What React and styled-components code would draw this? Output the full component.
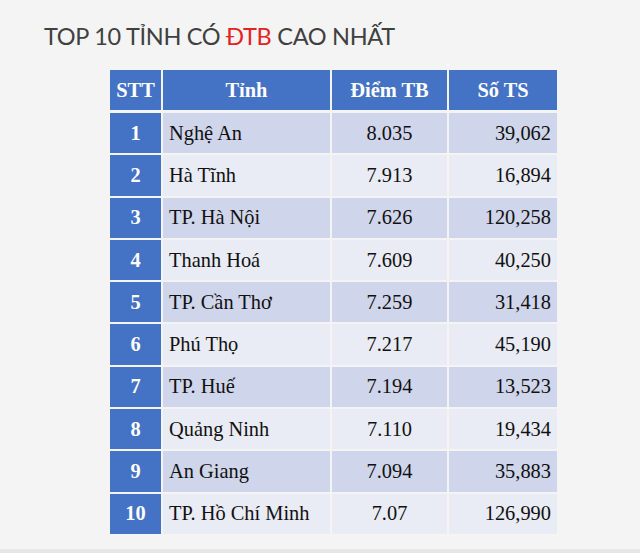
import React from 'react';
import styled, { createGlobalStyle } from 'styled-components';

const GlobalStyle = createGlobalStyle`
  html, body {
    margin: 0;
    padding: 0;
    background: #f4f4f4;
  }
`;

const Page = styled.div`
  width: 640px;
  height: 549px;
  background: #f4f4f4;
  border-bottom: 4px solid #e6e6e6;
  padding-top: 21px;
  box-sizing: border-box;
  height: 553px;
`;

const Title = styled.h1`
  margin: 0 0 0 44px;
  font-family: Lato, "Open Sans", sans-serif;
  font-weight: 400;
  font-size: 23.5px;
  line-height: 30px;
  color: #404040;
  letter-spacing: -0.3px;

  span {
    color: #e2231f;
  }
`;

const Table = styled.div`
  margin: 19px 0 0 110px;
  width: 447px;
  display: grid;
  grid-template-columns: 51px 167px 115px 108px;
  column-gap: 2px;
  font-family: "Liberation Serif", "Times New Roman", serif;
  font-size: 20.4px;
  color: #111;
`;

const HeadCell = styled.div`
  height: 40px;
  margin-bottom: 3px;
  background: #4472c4;
  color: #fff;
  font-weight: 700;
  display: flex;
  align-items: center;
  justify-content: center;
`;

const Cell = styled.div`
  height: 40.3px;
  margin-bottom: 2px;
  background: ${p => (p.$odd ? '#cfd5ea' : '#e9ebf5')};
  display: flex;
  align-items: center;
  justify-content: ${p => p.$align || 'center'};
  padding: 0 ${p => (p.$align === 'flex-end' ? '6px' : '0')} 0 ${p => (p.$align === 'flex-start' ? '6px' : '0')};
`;

const IndexCell = styled(Cell)`
  background: #4472c4;
  color: #fff;
  font-weight: 700;
`;

const rows = [
  ['Nghệ An', '8.035', '39,062'],
  ['Hà Tĩnh', '7.913', '16,894'],
  ['TP. Hà Nội', '7.626', '120,258'],
  ['Thanh Hoá', '7.609', '40,250'],
  ['TP. Cần Thơ', '7.259', '31,418'],
  ['Phú Thọ', '7.217', '45,190'],
  ['TP. Huế', '7.194', '13,523'],
  ['Quảng Ninh', '7.110', '19,434'],
  ['An Giang', '7.094', '35,883'],
  ['TP. Hồ Chí Minh', '7.07', '126,990'],
];

export default function App() {
  return (
    <>
      <GlobalStyle />
      <Page>
        <Title>
          TOP 10 TỈNH CÓ <span>ĐTB</span> CAO NHẤT
        </Title>
        <Table>
          <HeadCell>STT</HeadCell>
          <HeadCell>Tỉnh</HeadCell>
          <HeadCell>Điểm TB</HeadCell>
          <HeadCell>Số TS</HeadCell>
          {rows.map((r, i) => (
            <React.Fragment key={i}>
              <IndexCell $odd={i % 2 === 0}>{i + 1}</IndexCell>
              <Cell $odd={i % 2 === 0} $align="flex-start">{r[0]}</Cell>
              <Cell $odd={i % 2 === 0}>{r[1]}</Cell>
              <Cell $odd={i % 2 === 0} $align="flex-end">{r[2]}</Cell>
            </React.Fragment>
          ))}
        </Table>
      </Page>
    </>
  );
}
